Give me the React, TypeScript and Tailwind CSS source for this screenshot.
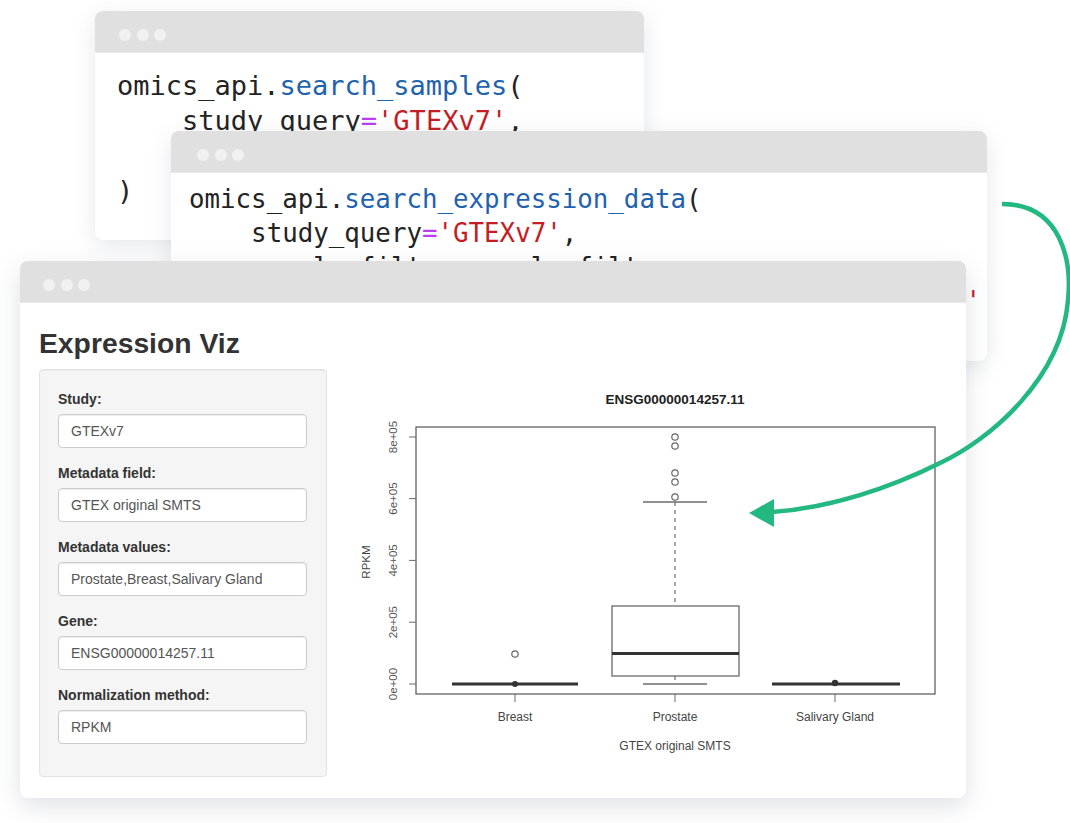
import React from "react";

const mono = { fontFamily: '"DejaVu Sans Mono", "Liberation Mono", monospace' };

function Dots({ pl }: { pl: string }) {
  return (
    <div className={`h-[42px] shrink-0 bg-[#e0e0e0] border-b border-[#e9e9e9] flex items-center pt-[6px] gap-[5.5px] ${pl}`}>
      <span className="w-[12px] h-[12px] rounded-full bg-[#f1f1f1]" />
      <span className="w-[12px] h-[12px] rounded-full bg-[#f1f1f1]" />
      <span className="w-[12px] h-[12px] rounded-full bg-[#f1f1f1]" />
    </div>
  );
}

const D = ({ children }: { children: React.ReactNode }) => <span className="text-[#232323]">{children}</span>;
const B = ({ children }: { children: React.ReactNode }) => <span className="text-[#1f62ad]">{children}</span>;
const R = ({ children }: { children: React.ReactNode }) => <span className="text-[#c41d24]">{children}</span>;
const P = ({ children }: { children: React.ReactNode }) => <span className="text-[#b83ef0]">{children}</span>;

function Field({ label, value }: { label: string; value: string }) {
  return (
    <div className="flex flex-col">
      <div className="text-[14px] leading-[20px] font-bold text-[#333]">{label}</div>
      <div className="mt-[5px] h-[34px] rounded-[4px] border border-[#ccc] bg-white shadow-[inset_0_1px_1px_rgba(0,0,0,0.075)] flex items-center pl-[12px] text-[14px] text-[#555]">
        {value}
      </div>
    </div>
  );
}

function Chart() {
  const gray = "#6b6b6b";
  const font = '"Liberation Sans", Arial, sans-serif';
  const yt = [
    { y: 315, l: "0e+00" },
    { y: 253.2, l: "2e+05" },
    { y: 191.4, l: "4e+05" },
    { y: 129.6, l: "6e+05" },
    { y: 68, l: "8e+05" },
  ];
  const outliers = [68, 77, 104, 113, 128];
  return (
    <svg width="610" height="400" viewBox="0 0 610 400" className="shrink-0" style={{ fontFamily: font }}>
      <text x="335" y="35" textAnchor="middle" fontSize="13.5" fontWeight="bold" fill="#222">
        ENSG00000014257.11
      </text>
      <rect x="76" y="58" width="519" height="267" fill="none" stroke="#555" strokeWidth="1.2" />
      {yt.map((t) => (
        <g key={t.l}>
          <line x1="69" x2="76" y1={t.y} y2={t.y} stroke={gray} strokeWidth="1" />
          <text
            x="57"
            y={t.y}
            fontSize="11.5"
            fill="#555"
            textAnchor="middle"
            transform={`rotate(-90 57 ${t.y})`}
          >
            {t.l}
          </text>
        </g>
      ))}
      <text x="30" y="193" fontSize="11.5" fill="#444" textAnchor="middle" transform="rotate(-90 30 193)">
        RPKM
      </text>
      {[175, 335, 495].map((x) => (
        <line key={x} x1={x} x2={x} y1="325" y2="333" stroke={gray} strokeWidth="1" />
      ))}
      <text x="175" y="352" fontSize="12" fill="#444" textAnchor="middle">Breast</text>
      <text x="335" y="352" fontSize="12" fill="#444" textAnchor="middle">Prostate</text>
      <text x="495" y="352" fontSize="12" fill="#444" textAnchor="middle">Salivary Gland</text>
      <text x="335" y="381" fontSize="12" fill="#444" textAnchor="middle">GTEX original SMTS</text>

      {/* Breast */}
      <line x1="112" x2="238" y1="315" y2="315" stroke="#333" strokeWidth="3" />
      <circle cx="175" cy="315" r="3" fill="#333" />
      <circle cx="175" cy="285" r="3.2" fill="none" stroke="#666" strokeWidth="1.2" />

      {/* Prostate */}
      <line x1="335" x2="335" y1="133" y2="237" stroke={gray} strokeWidth="1.2" strokeDasharray="4 4" />
      <line x1="335" x2="335" y1="307" y2="315" stroke={gray} strokeWidth="1.2" strokeDasharray="4 4" />
      <line x1="303" x2="367" y1="133" y2="133" stroke={gray} strokeWidth="1.3" />
      <line x1="303" x2="367" y1="315" y2="315" stroke={gray} strokeWidth="1.3" />
      <rect x="272" y="237" width="127" height="70" fill="white" stroke={gray} strokeWidth="1.3" />
      <line x1="272" x2="399" y1="284.5" y2="284.5" stroke="#333" strokeWidth="3" />
      {outliers.map((y) => (
        <circle key={y} cx="335" cy={y} r="3.2" fill="none" stroke="#666" strokeWidth="1.2" />
      ))}

      {/* Salivary Gland */}
      <line x1="432" x2="560" y1="315" y2="315" stroke="#333" strokeWidth="3" />
      <circle cx="495" cy="314" r="3.2" fill="#333" />
    </svg>
  );
}

export default function App() {
  return (
    <div className="relative w-[1070px] h-[823px] bg-white overflow-hidden" style={{ fontFamily: '"Liberation Sans", Arial, sans-serif' }}>
      {/* Window 1 */}
      <div className="absolute left-[95px] top-[11px] w-[549px] h-[229px] rounded-[8px] bg-white overflow-hidden flex flex-col shadow-[0_6px_22px_rgba(60,70,100,0.13)]">
        <Dots pl="pl-[24px]" />
        <div className="pt-[15px] pl-[22px] text-[27px] leading-[35px] whitespace-pre" style={mono}>
          <div><D>omics_api.</D><B>search_samples</B><D>(</D></div>
          <div><D>    study_query</D><P>=</P><R>'GTEXv7'</R><D>,</D></div>
          <div><D>    sample_filter</D><P>=</P><D>sample_filter,</D></div>
          <div><D>)</D></div>
        </div>
      </div>

      {/* Window 2 */}
      <div className="absolute left-[171px] top-[131px] w-[816px] h-[230px] rounded-[8px] bg-white overflow-hidden flex flex-col shadow-[0_6px_22px_rgba(60,70,100,0.13)]">
        <Dots pl="pl-[26px]" />
        <div className="pt-[9px] pl-[18px] text-[25.8px] leading-[34px] whitespace-pre" style={mono}>
          <div><D>omics_api.</D><B>search_expression_data</B><D>(</D></div>
          <div><D>    study_query</D><P>=</P><R>'GTEXv7'</R><D>,</D></div>
          <div><D>    sample_filter</D><P>=</P><D>sample_filter,</D></div>
          <div><D>    metadata_value</D><P>=</P><R>'Prostate,Breast,Salivary Gland'</R></div>
        </div>
      </div>

      {/* Window 3 */}
      <div className="absolute left-[20px] top-[261px] w-[946px] h-[537px] rounded-[8px] bg-white overflow-hidden flex flex-col shadow-[0_8px_24px_rgba(60,70,100,0.16)]">
        <Dots pl="pl-[23px]" />
        <div className="px-[19px] pt-[22px] flex flex-col">
          <h1 className="text-[28.3px] leading-[36px] font-bold text-[#333]">Expression Viz</h1>
          <div className="mt-[8px] flex items-start gap-[13px]">
            <div className="w-[288px] h-[408px] shrink-0 rounded-[4px] border border-[#e3e3e3] bg-[#f5f5f5] shadow-[inset_0_1px_1px_rgba(0,0,0,0.05)] pt-[19px] pl-[18px] pr-[19px] flex flex-col gap-[15px]">
              <Field label="Study:" value="GTEXv7" />
              <Field label="Metadata field:" value="GTEX original SMTS" />
              <Field label="Metadata values:" value="Prostate,Breast,Salivary Gland" />
              <Field label="Gene:" value="ENSG00000014257.11" />
              <Field label="Normalization method:" value="RPKM" />
            </div>
            <Chart />
          </div>
        </div>
      </div>

      {/* Arrow */}
      <svg className="absolute left-0 top-0 pointer-events-none" width="1070" height="823" viewBox="0 0 1070 823">
        <path
          d="M1002,204 C1062,204 1072,262 1068,300 C1062,378 990,440 940,463 C890,488 830,508 772,512"
          fill="none"
          stroke="#23b882"
          strokeWidth="4.5"
        />
        <polygon points="749,513 774,499 774,527" fill="#23b882" />
      </svg>
    </div>
  );
}
